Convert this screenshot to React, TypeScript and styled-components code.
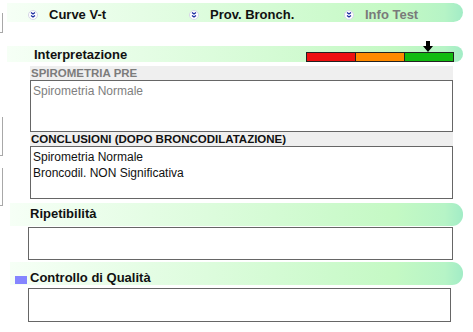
import React from 'react';
import styled, {createGlobalStyle} from 'styled-components';

const GlobalStyle = createGlobalStyle`
  html, body {
    margin: 0;
    padding: 0;
    background: #ffffff;
  }
  body {
    font-family: 'Liberation Sans', Arial, sans-serif;
    width: 473px;
    height: 332px;
    overflow: hidden;
  }
`;

const band = `linear-gradient(90deg, #f6fff6 0%, #dcfcdc 45%, #c4f9c4 85%, #b6f4c6 96%, #a2ecc6 100%)`;

const Page = styled.div`
  display: flex;
  flex-direction: row;
  width: 473px;
  height: 332px;
`;

const Gutter = styled.div`
  display: flex;
  flex-direction: column;
  width: 3px;
  flex: none;
`;

const GutterBox = styled.div<{$top: number; $height: number}>`
  margin-top: ${({$top}) => $top}px;
  height: ${({$height}) => $height}px;
  border-right: solid 1px #a8a8a8;
  border-bottom: solid 1px #a8a8a8;
`;

const Main = styled.div`
  display: flex;
  flex-direction: column;
  padding-left: 4px;
  width: 456px;
`;

const TabBar = styled.div`
  display: flex;
  align-items: flex-end;
  margin-top: 3px;
  height: 19px;
  padding-left: 21px;
  background: ${band};
  border-radius: 0 10px 10px 0;
`;

const Tab = styled.div<{$width: number; $muted?: boolean}>`
  display: flex;
  align-items: center;
  gap: 11px;
  width: ${({$width}) => $width}px;
  font-size: 13px;
  font-weight: bold;
  line-height: 15px;
  color: ${({$muted}) => ($muted ? '#7a7a7a' : '#111111')};
`;

const Header = styled.div<{$height: number; $top: number; $inset?: number; $pad: number; $align?: string}>`
  position: relative;
  display: flex;
  align-items: ${({$align}) => $align || 'center'};
  margin-top: ${({$top}) => $top}px;
  margin-left: ${({$inset}) => $inset || 0}px;
  height: ${({$height}) => $height}px;
  padding-left: ${({$pad}) => $pad}px;
  background: ${band};
  border-radius: 0 11px 11px 0;
  font-size: 13px;
  font-weight: bold;
  line-height: 15px;
  color: #111111;
`;

const HeaderTitle = styled.span<{$offset?: number}>`
  flex: 1;
  padding-top: ${({$offset}) => $offset || 0}px;
`;

const Marker = styled.span`
  position: absolute;
  left: 5px;
  bottom: 1px;
  width: 12px;
  height: 8px;
  background: #8585ff;
`;

const Scale = styled.div`
  position: relative;
  display: flex;
  margin-right: 9px;
  margin-top: 2px;
  border: solid 1px #222222;
`;

const Segment = styled.div<{$color: string}>`
  width: 48px;
  height: 8px;
  background: ${({$color}) => $color};
  & + & {
    border-left: solid 1px #222222;
  }
`;

const Pointer = styled.svg`
  position: absolute;
  top: -12px;
  left: 116px;
`;

const Section = styled.div`
  display: flex;
  flex-direction: column;
  margin-left: 23px;
  width: 423px;
`;

const Label = styled.div<{$muted?: boolean; $top?: number}>`
  margin-top: ${({$top}) => $top || 0}px;
  height: 14px;
  padding-left: 1px;
  background: #efefef;
  font-size: 11.5px;
  font-weight: bold;
  line-height: 15px;
  color: ${({$muted}) => ($muted ? '#7c7c7c' : '#111111')};
`;

const TextBox = styled.div<{$height: number; $muted?: boolean}>`
  height: ${({$height}) => $height}px;
  box-sizing: border-box;
  padding: 2px 2px;
  border: solid 1px #666666;
  background: #ffffff;
  font-size: 12px;
  line-height: 16px;
  color: ${({$muted}) => ($muted ? '#808080' : '#111111')};
`;

const Field = styled(TextBox)<{$top: number; $left: number; $width: number}>`
  margin-top: ${({$top}) => $top}px;
  margin-left: ${({$left}) => $left}px;
  width: ${({$width}) => $width}px;
`;

const TabIcon = () => (
  <svg width="10" height="10" viewBox="0 0 10 10">
    <circle cx="5" cy="5" r="4.5" fill="#ffffff" stroke="#d6d6e6" />
    <path d="M3 2.4 L5 4 L7 2.4 M3 5.4 L5 7 L7 5.4" fill="none" stroke="#1a2aa0" strokeWidth="1.3" />
  </svg>
);

const Tabs = [
  {label: 'Curve V-t', width: 161},
  {label: 'Prov. Bronch.', width: 155},
  {label: 'Info Test', width: 110, muted: true},
];

export default function App() {
  return (
    <Page>
      <GlobalStyle />
      <Gutter>
        <GutterBox $top={13} $height={19} />
        <GutterBox $top={84} $height={38} />
        <GutterBox $top={12} $height={37} />
      </Gutter>
      <Main>
        <TabBar>
          {Tabs.map((t) => (
            <Tab key={t.label} $width={t.width} $muted={t.muted}>
              <TabIcon />
              {t.label}
            </Tab>
          ))}
        </TabBar>

        <Header $top={24} $height={16} $pad={27} $align="flex-end">
          <HeaderTitle>Interpretazione</HeaderTitle>
          <Scale>
            <Segment $color="#ee1111" />
            <Segment $color="#ff8a00" />
            <Segment $color="#11bb11" />
            <Pointer width="10" height="11" viewBox="0 0 10 11">
              <path d="M3 0 H7 V5 H10 L5 11 L0 5 H3 Z" fill="#000000" />
            </Pointer>
          </Scale>
        </Header>

        <Section>
          <Label $muted $top={4}>SPIROMETRIA PRE</Label>
          <TextBox $height={52} $muted>Spirometria Normale</TextBox>
          <Label>CONCLUSIONI (DOPO BRONCODILATAZIONE)</Label>
          <TextBox $height={53}>
            Spirometria Normale
            <br />
            Broncodil. NON Significativa
          </TextBox>
        </Section>

        <Header $top={4} $height={23} $inset={3} $pad={20} $align="flex-start">
          <HeaderTitle $offset={3}>Ripetibilità</HeaderTitle>
        </Header>
        <Field $top={1} $left={21} $width={425} $height={33} />

        <Header $top={2} $height={23} $inset={3} $pad={20} $align="flex-end">
          <Marker />
          <HeaderTitle>Controllo di Qualità</HeaderTitle>
        </Header>
        <Field $top={3} $left={21} $width={423} $height={34} />
      </Main>
    </Page>
  );
}
